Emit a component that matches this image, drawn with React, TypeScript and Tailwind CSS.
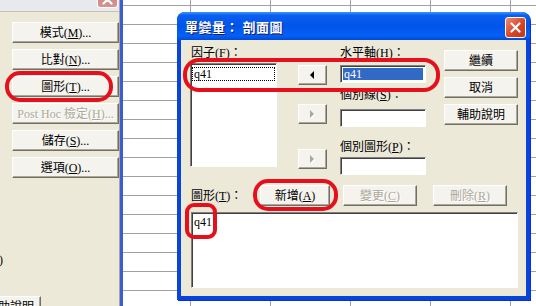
import React from 'react';

const ROWS = Array.from({ length: 16 });
const COLS = [68, 80, 80, 80, 80, 80];

const XpButton: React.FC<{ children: React.ReactNode; disabled?: boolean; className?: string }> = ({
  children,
  disabled,
  className = '',
}) => (
  <div
    className={`flex items-center justify-center h-[21px] shrink-0 bg-[#f4f3ee] border border-t-white border-l-white border-r-[#716f64] border-b-[#716f64] shadow-[inset_-1px_-1px_0_#aca899] text-[12px] leading-none whitespace-nowrap ${
      disabled ? 'text-[#aca899] [text-shadow:1px_1px_0_#fff]' : 'text-black'
    } ${className}`}
  >
    {children}
  </div>
);

const ArrowButton: React.FC<{ enabled?: boolean; className?: string }> = ({ enabled, className = '' }) => (
  <div
    className={`flex items-center justify-center w-[29px] h-[20px] bg-[#f4f3ee] border border-t-white border-l-white border-r-[#716f64] border-b-[#716f64] shadow-[inset_-1px_-1px_0_#aca899] ${className}`}
  >
    {enabled ? (
      <svg width="5" height="8" viewBox="0 0 5 8">
        <polygon points="4,0 4,8 0,4" fill="#000" />
      </svg>
    ) : (
      <svg width="6" height="9" viewBox="0 0 6 9">
        <polygon points="1,1 1,9 5,5" fill="#fff" />
        <polygon points="0,0 0,8 4,4" fill="#aca899" />
      </svg>
    )}
  </div>
);

const Field: React.FC<{ children?: React.ReactNode; selected?: boolean; className?: string }> = ({
  children,
  selected,
  className = '',
}) => (
  <div
    className={`w-[86px] h-[18px] bg-white border border-t-[#808080] border-l-[#808080] border-b-white border-r-white shadow-[inset_1px_1px_0_#404040] p-[2px] ${className}`}
  >
    {selected && (
      <div className="h-full bg-[#316ac5] text-white text-[12px] leading-[13px] pl-[1px]">{children}</div>
    )}
  </div>
);

const Oval: React.FC<{ className: string }> = ({ className }) => (
  <div className={`absolute border-[4px] border-[#e5101c] ${className}`} />
);

export default function App() {
  return (
    <div className="relative w-[536px] h-[306px] overflow-hidden flex bg-white font-['Liberation_Serif','Noto_Sans_CJK_TC',serif] text-black">
      {/* left dialog, partly visible */}
      <div className="w-[123px] h-full shrink-0 border-r-[3px] border-r-[#3a5cd6]">
        <div className="h-full flex flex-col bg-[#ece9d8] border-r border-r-[#aca899]">
          <div className="relative h-[12px] shrink-0 bg-[#e8e8ef] border-b border-b-[#c5c2b2]">
            <div className="absolute right-[1px] top-[-13px] w-[21px] h-[21px] rounded-[3px] border border-white bg-[linear-gradient(to_bottom,#c77b78,#d7958f)] flex items-end justify-center pb-[2px]">
              <svg width="11" height="11" viewBox="0 0 11 11">
                <path d="M1.5 1.5 L9.5 9.5 M9.5 1.5 L1.5 9.5" stroke="#fff" strokeWidth="2.2" strokeLinecap="round" />
              </svg>
            </div>
          </div>
          <div className="flex flex-col gap-[6px] pl-[12px] pt-[10px]">
            <XpButton>
              模式(<u>M</u>)...
            </XpButton>
            <XpButton>
              比對(<u>N</u>)...
            </XpButton>
            <XpButton>
              圖形(<u>T</u>)...
            </XpButton>
            <XpButton disabled>
              Post Hoc 檢定(<u>H</u>)...
            </XpButton>
            <XpButton>
              儲存(<u>S</u>)...
            </XpButton>
            <XpButton>
              選項(<u>O</u>)...
            </XpButton>
          </div>
          <div className="mt-[75px] h-[14px] text-[12px] leading-[14px] -ml-[1px]">)</div>
          <XpButton className="mt-[29px] -ml-[23px] w-[64px] !justify-start pl-[8px]">輔助說明</XpButton>
        </div>
      </div>

      {/* data sheet behind */}
      <div className="flex-1 flex flex-col">
        <div className="h-[6px] shrink-0 border-b border-b-[#a0a0a0] flex">
          {COLS.map((w, i) => (
            <div key={i} className="h-full shrink-0 border-r border-r-[#a0a0a0]" style={{ width: w }} />
          ))}
        </div>
        {ROWS.map((_, r) => (
          <div key={r} className="h-[19px] shrink-0 border-b border-b-[#a0a0a0] flex">
            {COLS.map((w, i) => (
              <div key={i} className="h-full shrink-0 border-r border-r-[#a0a0a0]" style={{ width: w }} />
            ))}
          </div>
        ))}
      </div>

      {/* profile plots dialog */}
      <div className="absolute left-[177px] top-[12px] w-[353px] h-[288px] flex flex-col rounded-t-[8px] bg-[#0844d9] shadow-[1px_1px_0_#0831d9]">
        <div className="h-[28px] shrink-0 flex items-center justify-between pl-[8px] pr-[4px] rounded-t-[8px] bg-[linear-gradient(to_bottom,#3d95ff_0%,#0a5ef0_12%,#0054e8_50%,#0560f5_85%,#0049d9_100%)]">
          <span className="text-white font-bold text-[13px] leading-none tracking-[0.5px] font-['Noto_Sans_CJK_TC',sans-serif] [text-shadow:1px_1px_0_#0a1e6e]">
            單變量： 剖面圖
          </span>
          <div className="w-[21px] h-[21px] mt-[2px] rounded-[3px] border border-white bg-[linear-gradient(135deg,#f08a6f,#d8452a_55%,#c23617)] flex items-center justify-center">
            <svg width="11" height="11" viewBox="0 0 11 11">
              <path d="M1.5 1.5 L9.5 9.5 M9.5 1.5 L1.5 9.5" stroke="#fff" strokeWidth="2.2" strokeLinecap="round" />
            </svg>
          </div>
        </div>

        <div className="flex-1 mx-[4px] mb-[4px] bg-[#ece9d8] flex flex-col text-[12px] leading-[12px]">
          <div className="flex pl-[9px]">
            {/* factors */}
            <div className="w-[87px] flex flex-col">
              <div className="mt-[7px] h-[12px] pl-[1px] whitespace-nowrap">
                因子(<u>F</u>)：
              </div>
              <div className="mt-[4px] h-[104px] bg-white border border-t-[#808080] border-l-[#808080] border-b-white border-r-white shadow-[inset_1px_1px_0_#404040] pt-[3px] px-[1px]">
                <div className="h-[14px] border border-dotted border-black leading-[12px] pl-[1px]">q41</div>
              </div>
            </div>

            {/* move arrows */}
            <div className="ml-[21px] flex flex-col">
              <ArrowButton enabled className="mt-[25px]" />
              <ArrowButton className="mt-[19px]" />
              <ArrowButton className="mt-[25px]" />
            </div>

            {/* axis fields */}
            <div className="ml-[13px] flex flex-col">
              <div className="mt-[7px] h-[12px] whitespace-nowrap">
                水平軸(<u>H</u>)：
              </div>
              <Field selected className="mt-[6px]">
                q41
              </Field>
              <div className="mt-[6px] h-[12px] whitespace-nowrap">
                個別線(<u>S</u>)：
              </div>
              <Field className="mt-[8px]" />
              <div className="mt-[14px] h-[12px] whitespace-nowrap">
                個別圖形(<u>P</u>)：
              </div>
              <Field className="mt-[4px]" />
            </div>

            {/* dialog buttons */}
            <div className="ml-[18px] flex flex-col gap-[6px] pt-[10px]">
              <XpButton className="w-[74px]">繼續</XpButton>
              <XpButton className="w-[74px]">取消</XpButton>
              <XpButton className="w-[74px]">輔助說明</XpButton>
            </div>
          </div>

          {/* plots row */}
          <div className="flex items-center pl-[10px] mt-[10px]">
            <div className="w-[69px] whitespace-nowrap">
              圖形(<u>T</u>)：
            </div>
            <XpButton className="w-[70px]">
              新增(<u>A</u>)
            </XpButton>
            <XpButton disabled className="w-[74px] ml-[13px]">
              變更(<u>C</u>)
            </XpButton>
            <XpButton disabled className="w-[74px] ml-[16px]">
              刪除(<u>R</u>)
            </XpButton>
          </div>

          <div className="ml-[10px] mt-[6px] w-[327px] h-[76px] bg-white border border-t-[#808080] border-l-[#808080] border-b-white border-r-white shadow-[inset_1px_1px_0_#404040] pt-[3px] pl-[2px]">
            q41
          </div>
        </div>
      </div>

      {/* red annotation marks */}
      <Oval className="left-[5px] top-[71px] w-[108px] h-[31px] rounded-[15px]" />
      <Oval className="left-[183px] top-[58px] w-[257px] h-[34px] rounded-[16px]" />
      <Oval className="left-[253px] top-[179px] w-[85px] h-[32px] rounded-[15px]" />
      <Oval className="left-[185px] top-[203px] w-[32px] h-[36px] rounded-[9px]" />
    </div>
  );
}
